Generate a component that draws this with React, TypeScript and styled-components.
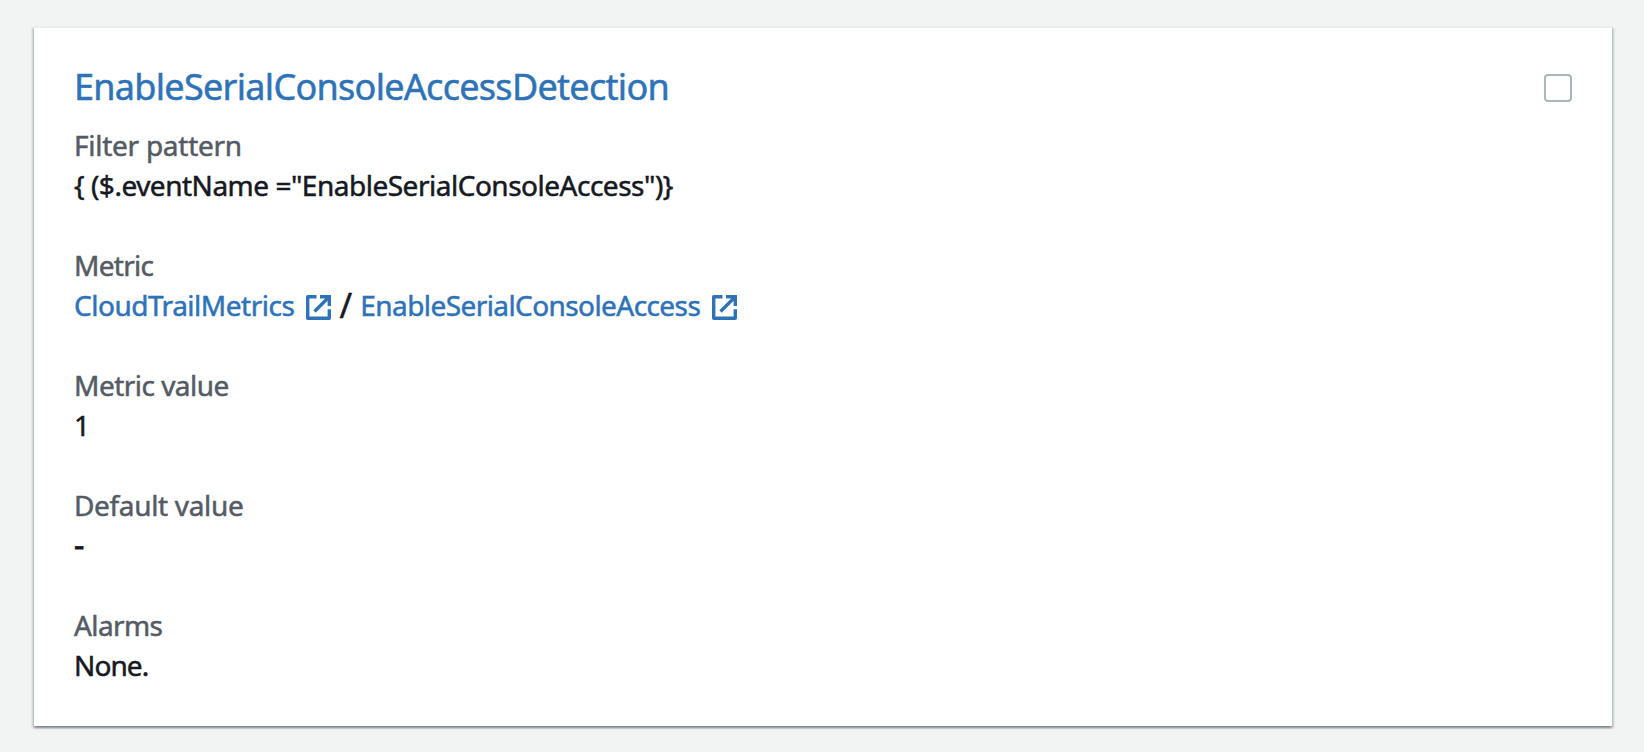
import React from 'react'
import styled, { createGlobalStyle } from 'styled-components'

const ExternalIcon: React.FC = () => (
  <IconSvg viewBox="0 0 25 25" fill="none" stroke="currentColor" strokeWidth="3.4" strokeLinejoin="round">
    <path d="M10.5 1.7H1.7v21.6h21.6v-9" />
    <path d="M14 1.7h9.3V11" strokeLinejoin="miter" />
    <path d="M22.5 2.5 8.5 16.5" />
  </IconSvg>
)

const MetricLink: React.FC<{ tracking: number; children: string }> = (props) => (
  <Link href="#">
    <Text tracking={props.tracking}>{props.children}</Text>
    <ExternalIcon />
  </Link>
)

const App: React.FC = () => {
  return (
    <>
      <GlobalStyle />
      <Page>
        <Card>
          <Header>
            <Title href="#">EnableSerialConsoleAccessDetection</Title>
            <Checkbox type="checkbox" aria-label="Select filter" />
          </Header>
          <Fields>
            <Field>
              <Label tracking={-0.26}>Filter pattern</Label>
              <Value tracking={-0.49}>{'{ ($.eventName ="EnableSerialConsoleAccess")}'}</Value>
            </Field>
            <Field>
              <Label tracking={-0.7}>Metric</Label>
              <Value>
                <MetricLink tracking={-0.49}>CloudTrailMetrics</MetricLink>
                <Slash>/</Slash>
                <MetricLink tracking={-0.58}>EnableSerialConsoleAccess</MetricLink>
              </Value>
            </Field>
            <Field>
              <Label tracking={-0.52}>Metric value</Label>
              <Value>1</Value>
            </Field>
            <Field>
              <Label tracking={-0.33}>Default value</Label>
              <Dash>-</Dash>
            </Field>
            <Field>
              <Label tracking={-0.6}>Alarms</Label>
              <Value tracking={-0.9}>None.</Value>
            </Field>
          </Fields>
        </Card>
      </Page>
    </>
  )
}

export default App

//* Styled components *//

const GlobalStyle = createGlobalStyle`
  * {
    box-sizing: border-box;
  }

  body {
    margin: 0;
    background-color: #f2f3f3;
    font-family: 'Noto Sans', 'Open Sans', sans-serif;
    font-size: 28px;
    line-height: 40px;
    color: #16191f;
    -webkit-text-stroke: 0.5px currentColor;
  }
`

const Page = styled.main`
  height: 752px;
  padding: 26px 32px 26px 34px;
`

const Card = styled.section`
  height: 700px;
  padding: 37px 40px 0;
  background-color: #fff;
  background-clip: padding-box;
  border-top: 2px solid #eaeded;
  box-shadow:
    0 2px 2px 0 rgba(0, 28, 36, 0.3),
    2px 2px 2px 0 rgba(0, 28, 36, 0.15),
    -2px 2px 2px 0 rgba(0, 28, 36, 0.15);
`

const Header = styled.header`
  display: flex;
  justify-content: space-between;
  align-items: flex-start;
`

const Title = styled.a`
  font-size: 36px;
  line-height: 44px;
  letter-spacing: -0.71px;
  color: #2e73b8;
  text-decoration: none;
`

const Checkbox = styled.input`
  appearance: none;
  width: 28px;
  height: 28px;
  margin: 9px 0 0;
  border: 2px solid #aab7b8;
  border-radius: 4px;
  background-color: #fff;
`

const Fields = styled.div`
  display: flex;
  flex-direction: column;
  gap: 40px;
  margin-top: 16px;
`

const Field = styled.div`
  display: flex;
  flex-direction: column;
`

const Text = styled.span<{ tracking?: number }>`
  letter-spacing: ${(props) => props.tracking ?? 0}px;
`

const Label = styled(Text)`
  color: #545b64;
`

const Value = styled(Text)`
  display: flex;
  height: 40px;
`

const Dash = styled(Value)`
  font-size: 32px;
  -webkit-text-stroke-width: 0.8px;
`

const Link = styled.a`
  display: inline-flex;
  align-items: center;
  color: #2e73b8;
  text-decoration: none;
`

const IconSvg = styled.svg`
  width: 25px;
  height: 25px;
  margin-top: 5px;
  margin-left: 12px;
`

const Slash = styled.span`
  width: 29px;
  font-size: 34px;
  text-align: center;
`
